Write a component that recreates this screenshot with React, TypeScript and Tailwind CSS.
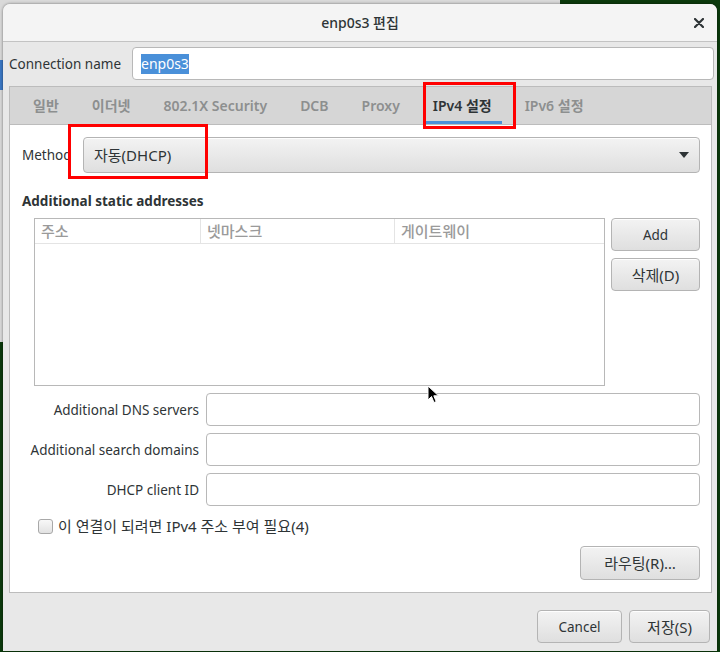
import React from "react";

const btn =
  "flex items-center justify-center rounded-[4px] border border-[#b4b4b4] bg-linear-to-b from-[#f3f3f3] to-[#dfdfdf] shadow-[inset_0_1px_0_rgba(255,255,255,0.9)] text-[#2e3436]";

const tabs = ["일반", "이더넷", "802.1X Security", "DCB", "Proxy", "IPv4 설정", "IPv6 설정"];

function Field({ label }: { label: string }) {
  return (
    <div className="flex items-center h-[33px]">
      <div className="w-[184px] pr-[7px] text-right whitespace-nowrap">{label}</div>
      <div className="flex-1 h-full rounded-[4px] border border-[#b8b8b8] bg-white"></div>
    </div>
  );
}

export default function App() {
  return (
    <div className="relative w-[720px] h-[652px] overflow-hidden bg-[#0b3a0c] text-[13.5px] leading-[20px] text-[#2e3436] font-['Noto_Sans','Noto_Sans_CJK_KR',sans-serif]">
      {/* window behind the dialog */}
      <div className="absolute left-0 top-0 w-[560px] h-[342px] bg-[#d9d9d9]"></div>
      <div className="absolute left-0 top-[60px] w-[3px] h-[30px] bg-[#3b78c4]"></div>

      {/* dialog */}
      <div className="absolute left-[3px] top-[4px] w-[714px] h-[647px] flex flex-col rounded-t-[7px] bg-[#e8e8e8] shadow-[0_0_3px_rgba(0,0,0,0.5)]">
        {/* header */}
        <div className="relative h-[38px] flex items-center justify-center rounded-t-[7px] bg-[#f4f4f4] border-b border-[#c3c3c3]">
          <span className="font-medium text-[14px]">enp0s3 편집</span>
          <svg className="absolute right-[13px] top-[14px]" width="10" height="10" viewBox="0 0 10 10">
            <path d="M1 1 L9 9 M9 1 L1 9" stroke="#2e3436" strokeWidth="2.2" strokeLinecap="round" />
          </svg>
        </div>

        <div className="flex flex-col pl-[6px] pr-[3px]">
          {/* connection name */}
          <div className="mt-[5px] flex items-center h-[33px]">
            <div className="w-[123px]">Connection name</div>
            <div className="flex-1 h-full flex items-center rounded-[4px] border border-[#b8b8b8] bg-white pl-[8px]">
              <span className="bg-[#4a90d9] text-white text-[14px]">enp0s3</span>
            </div>
          </div>

          {/* notebook */}
          <div className="mt-[6px] mr-[2px] border border-[#bcbcbc]">
            <div className="h-[38px] flex items-stretch gap-[13px] pl-[13px] bg-[#d6d6d6] border-b border-[#bcbcbc] text-[14px]">
              {tabs.map((t) => (
                <div
                  key={t}
                  className={
                    t === "IPv4 설정"
                      ? "flex items-center px-[10px] font-semibold text-[#2e3436] border-b-[3px] border-[#4a90d9] pt-[3px]"
                      : "flex items-center px-[10px] font-semibold text-[#8d8f8f] border-b-[3px] border-transparent pt-[3px]"
                  }
                >
                  {t}
                </div>
              ))}
            </div>

            <div className="h-[467px] bg-white pl-[12px] pr-[11px] pt-[12px] flex flex-col">
              {/* method */}
              <div className="flex items-center h-[36px]">
                <div className="w-[61px] whitespace-nowrap">Method</div>
                <div className={btn + " flex-1 h-full !justify-between px-[10px]"}>
                  <span className="text-[15px]">자동(DHCP)</span>
                  <svg width="10" height="6" viewBox="0 0 10 6">
                    <path d="M0 0 L10 0 L5 6 Z" fill="#2e3436" />
                  </svg>
                </div>
              </div>

              <div className="mt-[18px] h-[20px] font-bold">Additional static addresses</div>

              {/* addresses table */}
              <div className="mt-[7px] flex gap-[6px]">
                <div className="ml-[12px] w-[571px] h-[168px] border border-[#b8b8b8] bg-white">
                  <div className="h-[25px] flex border-b border-[#e4e4e4] text-[#9a9a9a] text-[15px] font-medium">
                    <div className="w-[166px] pl-[6px] flex items-center border-r border-[#e4e4e4]">주소</div>
                    <div className="w-[194px] pl-[6px] flex items-center border-r border-[#e4e4e4]">넷마스크</div>
                    <div className="flex-1 pl-[6px] flex items-center">게이트웨이</div>
                  </div>
                </div>
                <div className="flex-1 flex flex-col gap-[7px]">
                  <div className={btn + " h-[33px]"}>Add</div>
                  <div className={btn + " h-[33px] text-[15px]"}>삭제(D)</div>
                </div>
              </div>

              {/* fields */}
              <div className="mt-[7px] flex flex-col gap-[7px]">
                <Field label="Additional DNS servers" />
                <Field label="Additional search domains" />
                <Field label="DHCP client ID" />
              </div>

              <div className="mt-[11px] flex items-center h-[18px] pl-[16px]">
                <div className="w-[15px] h-[15px] rounded-[3px] border border-[#a8a8a8] bg-linear-to-b from-[#f8f8f8] to-[#e2e2e2]"></div>
                <span className="ml-[5px] text-[15px]">이 연결이 되려면 IPv4 주소 부여 필요(4)</span>
              </div>

              <div className="mt-[11px] flex justify-end">
                <div className={btn + " w-[120px] h-[34px] text-[15px]"}>라우팅(R)…</div>
              </div>
            </div>
          </div>

          {/* footer */}
          <div className="pt-[17px] flex justify-end gap-[7px] pr-[4px]">
            <div className={btn + " w-[85px] h-[33px]"}>Cancel</div>
            <div className={btn + " w-[81px] h-[33px] text-[15px]"}>저장(S)</div>
          </div>
        </div>
      </div>

      {/* annotation boxes */}
      <div className="absolute left-[423px] top-[82px] w-[93px] h-[47px] border-[3px] border-[#ff0000]"></div>
      <div className="absolute left-[68px] top-[124px] w-[140px] h-[55px] border-[3px] border-[#ff0000]"></div>

      {/* mouse pointer */}
      <svg className="absolute left-[427px] top-[385px]" width="13" height="20" viewBox="0 0 13 20">
        <path d="M1 1 L1 15 L4.5 11.5 L7 17.5 L9.2 16.6 L6.8 10.8 L11.5 10.8 Z" fill="#000" stroke="#fff" strokeWidth="1" />
      </svg>
    </div>
  );
}
